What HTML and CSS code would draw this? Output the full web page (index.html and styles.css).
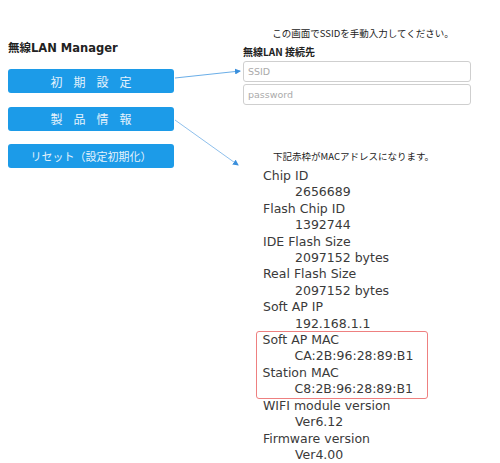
FILE: index.html
```html
<!DOCTYPE html>
<html lang="ja">
<head>
    <meta charset="UTF-8">
    <meta name="viewport" content="width=device-width, initial-scale=1.0">
    <title>無線LAN Manager</title>
    <link rel="stylesheet" href="styles.css">
</head>
<body>
    <div class="page">
        <div class="menu">
            <h1 class="menu-title">無線LAN Manager</h1>
            <button class="menu-btn spaced" type="button">初期設定</button>
            <button class="menu-btn spaced" type="button">製品情報</button>
            <button class="menu-btn" type="button">リセット（設定初期化）</button>
        </div>
        <div class="detail">
            <div class="wifi-box">
                <p class="note">この画面でSSIDを手動入力してください。</p>
                <div class="wifi-label">無線LAN 接続先</div>
                <input class="wifi-input" type="text" placeholder="SSID">
                <input class="wifi-input" type="password" placeholder="password">
            </div>
            <div class="info-box">
                <p class="note">下記赤枠がMACアドレスになります。</p>
                <dl class="info-list">
                    <dt>Chip ID</dt>
                    <dd>2656689</dd>
                    <dt>Flash Chip ID</dt>
                    <dd>1392744</dd>
                    <dt>IDE Flash Size</dt>
                    <dd>2097152 bytes</dd>
                    <dt>Real Flash Size</dt>
                    <dd>2097152 bytes</dd>
                    <dt>Soft AP IP</dt>
                    <dd>192.168.1.1</dd>
                </dl>
                <dl class="info-list mac-frame">
                    <dt>Soft AP MAC</dt>
                    <dd>CA:2B:96:28:89:B1</dd>
                    <dt>Station MAC</dt>
                    <dd>C8:2B:96:28:89:B1</dd>
                </dl>
                <dl class="info-list">
                    <dt>WIFI module version</dt>
                    <dd>Ver6.12</dd>
                    <dt>Firmware version</dt>
                    <dd>Ver4.00</dd>
                </dl>
            </div>
        </div>
        <!-- 説明用の矢印 -->
        <svg class="arrows" width="500" height="463" viewBox="0 0 500 463">
            <defs>
                <marker id="head" markerWidth="6" markerHeight="6" refX="5" refY="3" orient="auto">
                    <path d="M0,0 L6,3 L0,6 Z" fill="#3a8fdc"/>
                </marker>
            </defs>
            <line x1="175" y1="78" x2="240" y2="71" stroke="#6aaee8" stroke-width="1" marker-end="url(#head)"/>
            <line x1="175" y1="120" x2="238" y2="165" stroke="#8fc0ec" stroke-width="1" marker-end="url(#head)"/>
        </svg>
    </div>
</body>
</html>
```

FILE: styles.css
```css
body {
    margin: 0;
    background: #fff;
    color: #333;
    font-family: "DejaVu Sans", Verdana, "Noto Sans CJK JP", sans-serif;
}
.page {
    position: relative;
    width: 500px;
    height: 463px;
    display: flex;
}
.menu {
    width: 166px;
    margin-left: 8px;
    padding-top: 41px;
    display: flex;
    flex-direction: column;
}
.menu-title {
    margin: 0 0 14px;
    font-size: 11.5px;
    font-weight: bold;
    color: #222;
    line-height: 14px;
}
.menu-btn {
    height: 24px;
    margin-bottom: 13.5px;
    border: none;
    border-radius: 3px;
    background-color: #1c9be8;
    color: #e4f2fc;
    font-family: "Noto Sans CJK JP", sans-serif;
    font-size: 11px;
    padding: 0;
}
.menu-btn.spaced {
    font-size: 12px;
    letter-spacing: 11px;
    text-indent: 11px;
}
.detail {
    margin-left: 69px;
    padding-top: 26px;
    display: flex;
    flex-direction: column;
}
.wifi-box {
    width: 228px;
}
.note {
    margin: 0;
    font-family: "Noto Sans CJK JP", sans-serif;
    font-size: 9.5px;
    line-height: 14px;
    color: #222;
}
.wifi-box .note {
    text-align: center;
    padding-left: 12px;
}
.wifi-label {
    font-family: "Noto Sans CJK JP", sans-serif;
    font-size: 10px;
    font-weight: bold;
    line-height: 14px;
    margin-top: 5px;
    color: #222;
}
.wifi-input {
    display: block;
    box-sizing: border-box;
    width: 228px;
    height: 21px;
    margin-top: 2px;
    padding: 0 4px;
    border: 1px solid #cfcfcf;
    border-radius: 3px;
    font-family: "DejaVu Sans", sans-serif;
    font-size: 9.5px;
    color: #999;
}
.wifi-input::placeholder {
    color: #aaa;
}
.info-box {
    margin-top: 44px;
    margin-left: 13px;
}
.info-box .note {
    margin-left: 17px;
    margin-bottom: 5px;
}
.info-list {
    margin: 0;
    font-size: 12.5px;
    line-height: 16.4px;
    color: #3a3a3a;
}
.info-list dt {
    margin-left: 7px;
}
.info-list dd {
    margin-left: 39px;
}
.mac-frame {
    width: 170px;
    border: 1.5px solid #ee8080;
    border-radius: 3px;
    margin: -1px 0 -1px 0;
    padding: 0;
}
.mac-frame dt {
    margin-left: 5.5px;
}
.mac-frame dd {
    margin-left: 37.5px;
}
.arrows {
    position: absolute;
    left: 0;
    top: 0;
    pointer-events: none;
}
```
